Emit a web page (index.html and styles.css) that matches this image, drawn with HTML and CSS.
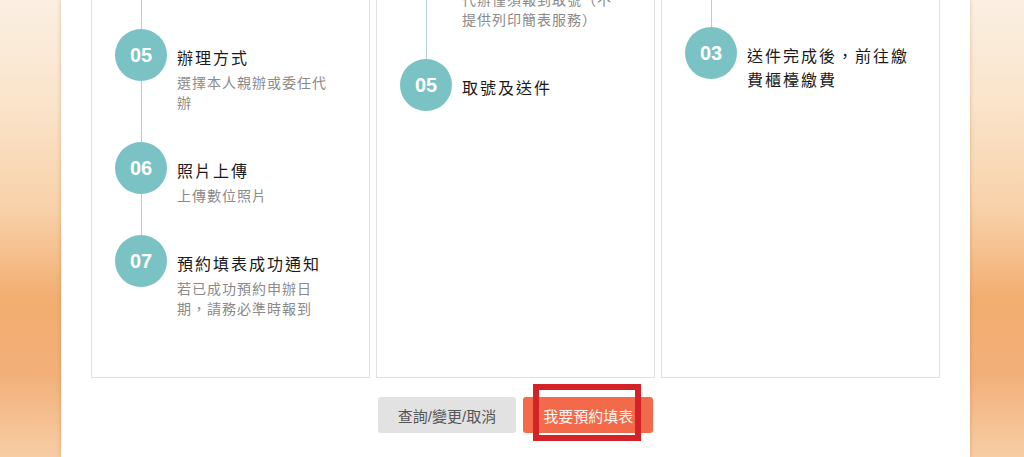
FILE: index.html
```html
<!DOCTYPE html>
<html lang="zh-TW">

<head>
  <meta charset="utf-8">
  <title>護照申辦流程</title>
  <link rel="stylesheet" href="styles.css">
</head>

<body>
  <main class="panel">
    <!-- page is scrolled down: the top of the cards sits above the window -->
    <div class="flow">
      <div class="flow-card">
        <div class="step">
          <span class="step-num">01</span>
          <div class="step-text">
            <div class="step-title">登入會員</div>
            <div class="step-desc">使用帳號密碼登入</div>
          </div>
        </div>
        <div class="step">
          <span class="step-num">02</span>
          <div class="step-text">
            <div class="step-title">選擇申辦項目</div>
            <div class="step-desc">選擇欲申辦之證件</div>
          </div>
        </div>
        <div class="step">
          <span class="step-num">03</span>
          <div class="step-text">
            <div class="step-title">填寫申請資料</div>
            <div class="step-desc">請依序填寫個人基本資料及聯絡方式</div>
          </div>
        </div>
        <div class="step">
          <span class="step-num">04</span>
          <div class="step-text">
            <div class="step-title">選擇申辦地點</div>
            <div class="step-desc">選擇受理機關及日期</div>
          </div>
        </div>
        <div class="step">
          <span class="step-num">05</span>
          <div class="step-text">
            <div class="step-title">辦理方式</div>
            <div class="step-desc">選擇本人親辦或委任代辦</div>
          </div>
        </div>
        <div class="step">
          <span class="step-num">06</span>
          <div class="step-text">
            <div class="step-title">照片上傳</div>
            <div class="step-desc">上傳數位照片</div>
          </div>
        </div>
        <div class="step">
          <span class="step-num">07</span>
          <div class="step-text">
            <div class="step-title">預約填表成功通知</div>
            <div class="step-desc">若已成功預約申辦日期，請務必準時報到</div>
          </div>
        </div>
      </div>

      <div class="flow-card">
        <div class="step">
          <span class="step-num">01</span>
          <div class="step-text">
            <div class="step-title">抵達受理機關</div>
          </div>
        </div>
        <div class="step">
          <span class="step-num">02</span>
          <div class="step-text">
            <div class="step-title">至服務台領取號碼牌並填寫申請書</div>
          </div>
        </div>
        <div class="step">
          <span class="step-num">03</span>
          <div class="step-text">
            <div class="step-title">備妥應備文件</div>
            <div class="step-desc">身分證正本、照片二張及相關證明文件，未成年人另需父母同意書</div>
          </div>
        </div>
        <div class="step">
          <span class="step-num">04</span>
          <div class="step-text">
            <div class="step-title">現場報到</div>
            <div class="step-desc">代辦僅須報到取號（不提供列印簡表服務）</div>
          </div>
        </div>
        <div class="step">
          <span class="step-num">05</span>
          <div class="step-text">
            <div class="step-title">取號及送件</div>
          </div>
        </div>
      </div>

      <div class="flow-card">
        <div class="step">
          <span class="step-num">01</span>
          <div class="step-text">
            <div class="step-title">現場抽取號碼牌</div>
            <div class="step-desc">請於服務時間內至受理櫃檯抽取號碼牌，並於叫號時攜帶身分證正本及相關文件至指定櫃檯辦理申請手續</div>
          </div>
        </div>
        <div class="step">
          <span class="step-num">02</span>
          <div class="step-text">
            <div class="step-title">填寫申請書並繳交應備文件</div>
            <div class="step-desc">申請書應以正楷詳細填寫，並黏貼最近六個月內拍攝之彩色照片，未滿十八歲者須由法定代理人簽名同意後始得受理申請</div>
          </div>
        </div>
        <div class="step">
          <span class="step-num">03</span>
          <div class="step-text">
            <div class="step-title">送件完成後，前往繳費櫃檯繳費</div>
          </div>
        </div>
      </div>
    </div>

    <div class="actions">
      <button class="btn btn-gray">查詢/變更/取消</button>
      <span class="btn-wrap">
        <button class="btn btn-orange">我要預約填表</button>
        <span class="mark"></span>
      </span>
    </div>
  </main>
</body>

</html>
```

FILE: styles.css
```css
html, body {
  margin: 0;
  height: 100%;
}

body {
  font-family: "Liberation Sans", "Noto Sans CJK TC", sans-serif;
  overflow: hidden;
  background: linear-gradient(to bottom,
      #fbefe2 0%,
      #fae4cb 22%,
      #f8d2aa 45%,
      #f2ad6f 66%,
      #f2b079 82%,
      #f7cda5 100%);
}

.panel {
  box-sizing: border-box;
  width: 909px;
  height: 100%;
  margin-left: 61px;
  padding: 0 30px;
  background: #fff;
  overflow: hidden;
  box-shadow: 0 0 4px rgba(170, 100, 40, 0.35);
}

.flow {
  display: grid;
  grid-template-columns: repeat(3, 1fr);
  gap: 6px;
  margin-top: -394px;
}

.flow-card {
  border: 1px solid #e2e2e2;
  padding: 30px 29px 59px 23px;
  display: flex;
  flex-direction: column;
  gap: 30px;
}

.step {
  position: relative;
  display: flex;
  align-items: flex-start;
  gap: 10px;
}

/* connector down to the next circle */
.step:not(:last-child)::before {
  content: "";
  position: absolute;
  left: 26px;
  top: 26px;
  bottom: -30px;
  width: 1px;
  background: #b4cdd3;
}

.step-num {
  position: relative;
  flex: none;
  width: 52px;
  height: 52px;
  border-radius: 50%;
  background: #7ac2c3;
  color: #fff;
  font-family: "Liberation Sans", Arial, sans-serif;
  font-weight: bold;
  font-size: 20px;
  display: flex;
  align-items: center;
  justify-content: center;
}

.step-text {
  flex: 1;
  padding-top: 16px;
  font-family: "Noto Sans CJK TC", sans-serif;
}

.step-title {
  font-size: 16px;
  line-height: 24px;
  letter-spacing: 2px;
  color: #1a1a1a;
}

.step-desc {
  margin-top: 3px;
  font-size: 14px;
  line-height: 20px;
  letter-spacing: 1px;
  color: #8a8a8a;
}

.actions {
  display: flex;
  justify-content: center;
  gap: 7px;
  margin-top: 19px;
}

.btn {
  height: 36px;
  padding: 0 20px;
  border: none;
  border-radius: 3px;
  font-family: "Liberation Sans", "Noto Sans CJK TC", sans-serif;
  font-size: 15px;
}

.btn-gray {
  background: #e2e2e2;
  color: #555;
}

.btn-orange {
  background: #f36a4a;
  color: #fff3ee;
}

.btn-wrap {
  position: relative;
  display: flex;
}

/* red highlight drawn over the reserve button */
.mark {
  position: absolute;
  left: 10px;
  top: -13px;
  width: 108px;
  height: 57px;
  box-sizing: border-box;
  border: 6px solid #d42229;
}
```
